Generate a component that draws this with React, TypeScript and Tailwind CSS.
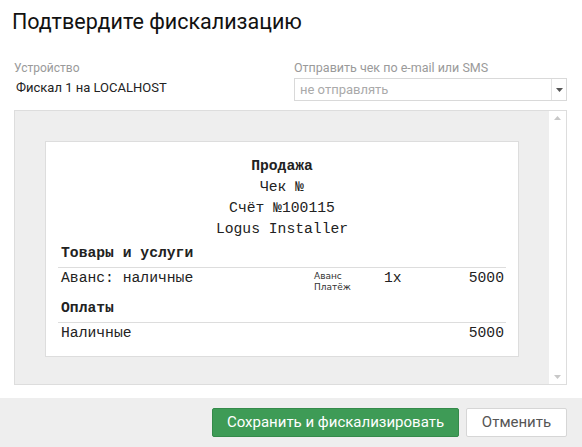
const receiptFont = {
  fontFamily: '"Courier New", "Nimbus Mono PS", FreeMono, "Liberation Mono", monospace',
};

function Select() {
  return (
    <div className="flex h-[23px] w-full items-stretch border border-[#d9d9d9] bg-white">
      <div className="flex flex-1 items-center pl-[5px] text-[13px] text-[#aaaaaa]">не отправлять</div>
      <div className="flex w-[15px] items-center justify-center border-l border-[#e3e3e3]">
        <svg width="7" height="4" viewBox="0 0 7 4">
          <path d="M0 0h7L3.5 4z" fill="#555" />
        </svg>
      </div>
    </div>
  );
}

function Receipt() {
  return (
    <div
      className="w-[474px] border border-[#dddddd] bg-white px-[12px] pb-[12px] pt-[14px] text-[14.7px] text-[#222]"
      style={receiptFont}
    >
      <div className="text-center leading-[21px]">
        <div className="font-bold">Продажа</div>
        <div>Чек №</div>
        <div>Счёт №100115</div>
        <div>Logus Installer</div>
      </div>

      <div className="mt-[3px] border-b border-[#dddddd] pb-[3px] pl-[3px] font-bold leading-[21px]">
        Товары и услуги
      </div>
      <div className="flex pb-[5px] leading-[21px]">
        <div className="flex-1 pl-[3px]">Аванс: наличные</div>
        <div
          className="w-[70px] pt-[3px] text-[9px] leading-[11px] text-[#333]"
          style={{ fontFamily: '"DejaVu Sans", Verdana, sans-serif' }}
        >
          <div>Аванс</div>
          <div>Платёж</div>
        </div>
        <div className="w-[60px]">1x</div>
        <div className="w-[62px] pr-[2px] text-right">5000</div>
      </div>

      <div className="border-b border-[#dddddd] pb-[3px] pl-[3px] font-bold leading-[21px]">Оплаты</div>
      <div className="flex leading-[21px]">
        <div className="flex-1 pl-[3px]">Наличные</div>
        <div className="pr-[2px] text-right">5000</div>
      </div>
    </div>
  );
}

export default function App() {
  return (
    <div
      className="flex h-[447px] w-[582px] flex-col bg-white"
      style={{ fontFamily: 'Roboto, "Noto Sans", sans-serif' }}
    >
      <h1 className="pl-[12px] pt-[6px] text-[21.5px] leading-[32px] text-[#111]">Подтвердите фискализацию</h1>

      <div className="mt-[22px] flex pl-[14px] pr-[15px]">
        <div className="w-[280px]">
          <div className="text-[12px] leading-[16px] text-[#9a9a9a]">Устройство</div>
          <div className="mt-[2px] pl-[2px] text-[13px] leading-[20px] text-[#222]">Фискал 1 на LOCALHOST</div>
        </div>
        <div className="flex-1">
          <div className="text-[12.5px] leading-[16px] text-[#9a9a9a]">Отправить чек по e-mail или SMS</div>
          <div className="mt-[2px]">
            <Select />
          </div>
        </div>
      </div>

      <div className="mx-[14px] mr-[15px] mt-[9px] flex h-[275px] border border-[#dddddd] bg-[#eeeeee]">
        <div className="flex flex-1 items-start justify-center pt-[30px]">
          <Receipt />
        </div>
        <div className="flex w-[17px] flex-col items-center justify-between bg-white py-[5px]">
          <svg width="7" height="4" viewBox="0 0 7 4">
            <path d="M0 4h7L3.5 0z" fill="#c8c8c8" />
          </svg>
          <svg width="7" height="4" viewBox="0 0 7 4">
            <path d="M0 0h7L3.5 4z" fill="#c8c8c8" />
          </svg>
        </div>
      </div>

      <div className="mt-[13px] flex flex-1 items-start justify-end gap-[7px] bg-[#eeeeee] pr-[15px] pt-[10px]">
        <button className="h-[29px] w-[247px] rounded-[2px] border border-[#348a4a] bg-[#3e9b56] text-[15px] text-white">
          Сохранить и фискализировать
        </button>
        <button className="h-[29px] w-[101px] rounded-[2px] border border-[#d6d6d6] bg-white text-[15px] text-[#555]">
          Отменить
        </button>
      </div>
    </div>
  );
}
